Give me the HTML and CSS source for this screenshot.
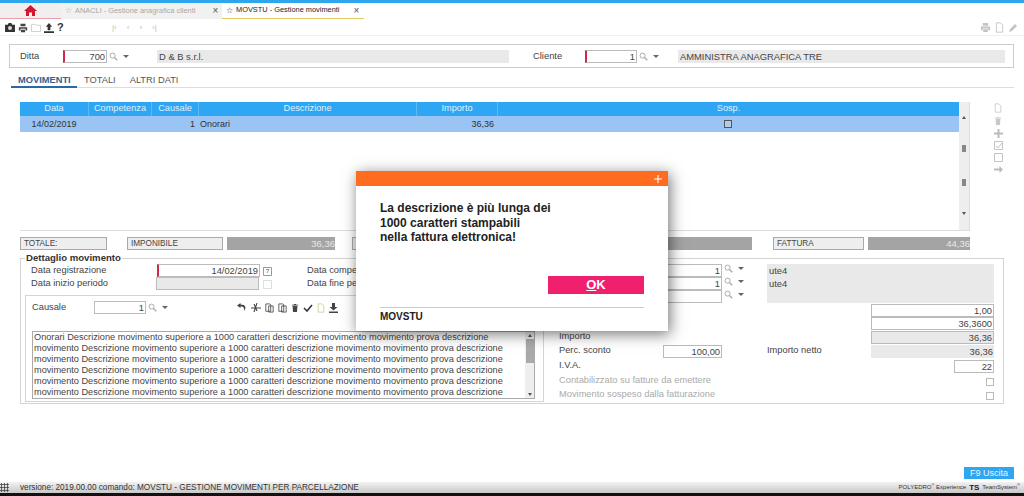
FILE: index.html
```html
<!DOCTYPE html>
<html lang="it">
<head>
<meta charset="utf-8">
<title>MOVSTU - Gestione movimenti</title>
<link rel="stylesheet" href="styles.css">
</head>
<body>
<svg class="defs" width="0" height="0" aria-hidden="true">
  <symbol id="i-search" viewBox="0 0 10 10"><circle cx="4" cy="4" r="2.8" fill="none" stroke="currentColor" stroke-width="1.1"/><path d="M6 6l3.2 3.2" stroke="currentColor" stroke-width="1.5"/></symbol>
  <symbol id="i-doc" viewBox="0 0 10 12"><path d="M1.5 .8h4.5l2.5 2.5v7.9h-7z" fill="none" stroke="currentColor"/></symbol>
  <symbol id="i-trash" viewBox="0 0 10 12"><path d="M1 2h8v1H1zM3.5 1h3v1h-3zM2 3.5h6L7.5 11h-5z" fill="currentColor"/></symbol>
  <symbol id="i-print" viewBox="0 0 12 12"><path d="M3 1h6v3H3zM1 5h10v4H9V7H3v2H1zM3.5 8h5v3h-5z" fill="currentColor"/></symbol>
  <symbol id="i-copy" viewBox="0 0 11 12"><path d="M1 1h5l1 1v8H1zM4.5 3.5H10V11H4.5z" fill="none" stroke="currentColor"/></symbol>
</svg>
<div class="app">
  <div class="topline"></div>
  <nav class="tabs">
    <a class="tab tab-home"><svg width="13" height="11" viewBox="0 0 13 11"><path d="M6.5 0L13 6h-2v5H8V7.500H5V11H2V6H0z" fill="#d4152c"/></svg></a>
    <a class="tab tab-off"><span class="star">☆</span><span class="tab-name">ANACLI - Gestione anagrafica clienti</span><span class="close">×</span></a>
    <a class="tab tab-on"><span class="star">☆</span><span class="tab-name">MOVSTU - Gestione movimenti</span><span class="close">×</span></a>
  </nav>
  <div class="toolbar">
    <div class="tool-left">
      <svg width="10" height="9" viewBox="0 0 11 10"><path d="M0 2h3l1-2h3l1 2h3v8H0z" fill="#333"/><circle cx="5.500" cy="5.500" r="2.200" fill="#ddd"/></svg>
      <svg width="10" height="10" class="ink"><use href="#i-print"/></svg>
      <svg width="10" height="9" viewBox="0 0 11 10"><path d="M.5 1.500h4l1 1h5v7H.5z" fill="none" stroke="#ccc"/></svg>
      <svg width="10" height="10" viewBox="0 0 11 11"><path d="M5.500 0l3.500 4H7v4H4V4H2zM0 9h11v2H0z" fill="#333"/></svg>
      <b class="help">?</b>
    </div>
    <div class="pager"><span>|‹</span><span>‹</span><span>›</span><span>›|</span></div>
    <div class="tool-right">
      <svg width="11" height="11" class="mute"><use href="#i-print"/></svg>
      <svg width="9" height="11" class="mute"><use href="#i-doc"/></svg>
      <svg width="10" height="10" viewBox="0 0 10 10"><path d="M1 9l1-3 5-5 2 2-5 5z" fill="#c4c4c4"/></svg>
    </div>
  </div>

  <section class="head-box">
    <label class="head-label">Ditta</label>
    <span class="inp req w-ditta">700</span>
    <span class="look"><svg width="9" height="9"><use href="#i-search"/></svg><i class="caret"></i></span>
    <span class="ro w-dname">D &amp; B s.r.l.</span>
    <label class="head-label w-cl">Cliente</label>
    <span class="inp req w-cli">1</span>
    <span class="look look-short"><svg width="9" height="9"><use href="#i-search"/></svg><i class="caret"></i></span>
    <span class="ro w-cname">AMMINISTRA ANAGRAFICA TRE</span>
  </section>

  <div class="subtabs">
    <a class="subtab active">MOVIMENTI</a>
    <a class="subtab">TOTALI</a>
    <a class="subtab">ALTRI DATI</a>
  </div>

  <section class="grid-area">
    <div class="grid-wrap">
      <div class="grid-main">
        <div class="g-row g-head"><span>Data</span><span>Competenza</span><span>Causale</span><span>Descrizione</span><span>Importo</span><span>Sosp.</span></div>
        <div class="g-row g-sel"><span>14/02/2019</span><span></span><span class="r">1</span><span class="l">Onorari</span><span class="r">36,36</span><span><i class="cb dark"></i></span></div>
      </div>
      <div class="vscroll"><i class="up"></i><i class="dbl"></i><i class="dbl"></i><i class="down"></i></div>
    </div>
    <div class="side-tools">
      <svg width="8" height="10"><use href="#i-doc"/></svg>
      <svg width="8" height="10"><use href="#i-trash"/></svg>
      <svg width="9" height="9" viewBox="0 0 9 9"><path d="M3.500 0h2v3.500H9v2H5.500V9h-2V5.500H0v-2h3.500z" fill="#bbb"/></svg>
      <svg width="9" height="9" viewBox="0 0 9 9"><path d="M.5.500h8v8h-8zM2 5l2 2 4-5" fill="none" stroke="#c4c4c4"/></svg>
      <svg width="9" height="9" viewBox="0 0 9 9"><path d="M.5.500h8v8h-8z" fill="none" stroke="#c4c4c4"/></svg>
      <svg width="9" height="9" viewBox="0 0 9 9"><path d="M0 3.500h5.500V1L9 4.500 5.500 8V5.500H0z" fill="#bbb"/></svg>
    </div>
  </section>

  <section class="totals">
    <span class="t-label w-tot">TOTALE:</span>
    <span class="t-label w-imp">IMPONIBILE</span>
    <span class="t-val w-v1">36,36</span>
    <span class="t-label w-mid"></span>
    <span class="t-val w-v2"></span>
    <span class="t-label w-fat">FATTURA</span>
    <span class="t-val w-v3">44,36</span>
  </section>

  <fieldset class="detail">
    <legend>Dettaglio movimento</legend>
    <div class="detail-left">
      <div class="date-row"><label class="d-label">Data registrazione</label><span class="inp req w-date">14/02/2019</span><svg class="cal" width="9" height="10" viewBox="0 0 9 10"><path d="M.5 1.500h8v8h-8zM3 3.500h3L4 7" fill="none" stroke="#999"/></svg><label class="d-label2">Data competenza</label></div>
      <div class="date-row"><label class="d-label">Data inizio periodo</label><span class="ro-b w-date2"></span><svg class="cal" width="9" height="10" viewBox="0 0 9 10"><path d="M.5 1.500h8v8h-8z" fill="none" stroke="#ddd"/></svg><label class="d-label2">Data fine periodo</label></div>
      <div class="causale-box">
        <div class="causale-row">
          <label class="c-label">Causale</label>
          <span class="inp w-caus">1</span>
          <span class="look"><svg width="9" height="9"><use href="#i-search"/></svg><i class="caret"></i></span>
          <div class="edit-tools">
            <svg width="10" height="9" viewBox="0 0 10 9"><path d="M3.500 0L0 2.500 3.500 5V3.500C6 3 7.500 4 7 8 9.500 5 9 1.500 3.500 1.500z" fill="#444"/></svg>
            <svg width="10" height="9" viewBox="0 0 10 9"><path d="M0 5h10M6 0L3 9M3 1l3 7" stroke="#444" stroke-width="1.100" fill="none"/></svg>
            <svg width="9" height="10" class="ink"><use href="#i-copy"/></svg>
            <svg width="9" height="10" class="ink"><use href="#i-copy"/></svg>
            <svg width="8" height="10" class="ink"><use href="#i-trash"/></svg>
            <svg width="10" height="8" viewBox="0 0 10 8"><path d="M1 4l3 3 5-6" fill="none" stroke="#333" stroke-width="1.600"/></svg>
            <svg width="8" height="10" class="olive"><use href="#i-doc"/></svg>
            <svg width="9" height="10" viewBox="0 0 9 10"><path d="M3 0h3v4h2.500L4.500 7.500.5 4H3zM0 8.500h9V10H0z" fill="#444"/></svg>
          </div>
        </div>
        <div class="memo">
          <p class="memo-text">Onorari Descrizione movimento superiore a 1000 caratteri descrizione movimento movimento prova descrizione<br>movimento Descrizione movimento superiore a 1000 caratteri descrizione movimento movimento prova descrizione<br>movimento Descrizione movimento superiore a 1000 caratteri descrizione movimento movimento prova descrizione<br>movimento Descrizione movimento superiore a 1000 caratteri descrizione movimento movimento prova descrizione<br>movimento Descrizione movimento superiore a 1000 caratteri descrizione movimento movimento prova descrizione<br>movimento Descrizione movimento superiore a 1000 caratteri descrizione movimento movimento prova descrizione</p>
          <div class="memo-bar"><i class="up"></i><i class="thumb"></i><i class="down"></i></div>
        </div>
      </div>
    </div>
    <div class="detail-right">
      <span class="f-label">Centro</span><span class="inp r-inp">1</span><span class="look"><svg width="9" height="9"><use href="#i-search"/></svg><i class="caret"></i></span><span class="ro span2">ute4</span>
      <span class="f-label">Voce</span><span class="inp r-inp">1</span><span class="look"><svg width="9" height="9"><use href="#i-search"/></svg><i class="caret"></i></span><span class="ro span2">ute4</span>
      <span class="f-label">Conto</span><span class="inp r-inp"></span><span class="look"><svg width="9" height="9"><use href="#i-search"/></svg><i class="caret"></i></span><span class="ro span2"></span>
      <span class="f-label span4">Quantità</span><span class="inp">1,00</span>
      <span class="f-label span4">Prezzo</span><span class="inp">36,3600</span>
      <span class="f-label span4">Importo</span><span class="ro-b num">36,36</span>
      <span class="f-label">Perc. sconto</span><span class="inp r-inp">100,00</span><span></span><span class="f-label">Importo netto</span><span class="ro num">36,36</span>
      <span class="f-label span4">I.V.A.</span><span class="inp w-iva">22</span>
      <span class="f-label muted span4">Contabilizzato su fatture da emettere</span><i class="cb end"></i>
      <span class="f-label muted span4">Movimento sospeso dalla fatturazione</span><i class="cb end"></i>
    </div>
  </fieldset>

  <div class="actions"><button class="exit">F9 Uscita</button></div>
  <footer class="status">
    <div class="status-left"><span class="dots"></span><span>versione: 2019.00.00 comando: MOVSTU - GESTIONE MOVIMENTI PER PARCELLAZIONE</span></div>
    <div class="status-right"><span>POLYEDRO<sup>®</sup> Experience</span><b class="ts">TS</b><span>TeamSystem<sup>®</sup></span></div>
  </footer>
  <div class="blackline"></div>
</div>

<div class="modal">
  <div class="modal-bar"><svg width="8" height="8" viewBox="0 0 9 9"><path d="M3.900 0h1.200v3.900H9v1.200H5.100V9H3.900V5.100H0V3.900h3.900z" fill="#fff"/></svg></div>
  <div class="modal-body">
    <p class="modal-msg">La descrizione è più lunga dei<br>1000 caratteri stampabili<br>nella fattura elettronica!</p>
    <div class="modal-act"><button class="ok"><u>O</u>K</button></div>
    <div class="modal-foot">MOVSTU</div>
  </div>
</div>
</body>
</html>
```
FILE: styles.css
```css
* { box-sizing: border-box; }
html, body { margin: 0; height: 100%; }
body { font: 9.3px/1.2 "Liberation Sans", Arial, sans-serif; color: #444; background: #fff; overflow: hidden; }
.defs { position: absolute; }
.app { height: 496px; display: flex; flex-direction: column; }
.topline { height: 3px; background: #2ea6ee; flex: none; }

.tabs { display: flex; height: 16px; flex: none; }
.tab { display: flex; align-items: center; font-size: 7.4px; }
.tab-home { width: 61px; justify-content: center; background: #f3eeee; border-bottom: 1px solid #e8a0b0; }
.tab-off { width: 161px; background: #f1f1f1; color: #a8a8a8; padding: 0 2px 0 3px; }
.tab-on { width: 142px; color: #222; border-bottom: 1px solid #e8c860; padding: 0 3px 0 3px; }
.star { width: 9px; text-align: center; margin-right: 2px; font-size: 8px; }
.tab-name { flex: 1; white-space: nowrap; }
.close { width: 9px; font-size: 10px; color: #555; text-align: center; }

.toolbar { height: 17px; flex: none; display: flex; align-items: center; padding: 1px 5px 0; border-bottom: 1px solid #f0f0f0; }
.tool-left { display: flex; align-items: center; gap: 3px; width: 107px; }
.help { font-size: 11px; color: #333; }
.pager { display: flex; gap: 10px; color: #bbb; font-size: 8px; }
.tool-right { margin-left: auto; display: flex; align-items: center; gap: 4px; margin-right: 1px; }
.ink { color: #444; }
.mute { color: #c4c4c4; }
.olive { color: #c8cc90; }

.head-box { flex: none; height: 24px; margin: 8px 10px 0 9px; border: 1px solid #ccc; display: flex; align-items: center; padding: 0 8px 0 10px; font-size: 9.4px; }
.head-label { width: 43px; color: #444; }
.inp { display: block; height: 13px; line-height: 12px; border: 1px solid #bbb; text-align: right; padding-right: 1px; background: #fff; color: #444; font-size: 9.3px; white-space: nowrap; }
.req { border-left: 2px solid #d02848; }
.w-ditta { width: 44px; }
.w-cli { width: 52px; }
.look { display: flex; align-items: center; width: 50px; padding-left: 2px; gap: 5px; color: #aaa; flex: none; }
.look-short { width: 41px; }
.detail-right .look { width: 45px; }
.causale-row .look { width: 37px; }
.caret { width: 0; height: 0; border: 3px solid transparent; border-top: 3px solid #666; border-bottom: 0; }
.ro { display: block; height: 13px; line-height: 13px; background: #e9e9e9; color: #444; padding-left: 2px; font-size: 9.4px; white-space: nowrap; }
.w-dname { width: 352px; }
.w-cl { width: 52px; margin-left: 24px; }
.w-cname { width: 327px; }

.subtabs { flex: none; height: 14px; margin: 6px 10px 0 11px; display: flex; border-bottom: 1px solid #ddd; font-size: 9.3px; }
.subtab { padding: 0 7px; line-height: 13px; color: #555; white-space: nowrap; }
.subtab.active { color: #33638f; font-weight: bold; border-bottom: 2px solid #2a6aa0; height: 14px; width: 66px; }

.grid-area { flex: none; height: 129px; margin: 14px 0 0 20px; display: flex; }
.grid-wrap { flex: none; width: 950px; border-right: 1px solid #ddd; border-bottom: 1px solid #ddd; display: flex; }
.grid-main { flex: 1; }
.g-row { display: grid; grid-template-columns: 68px 63px 47px 218px 81px 1fr; text-align: center; align-items: center; }
.g-row span { height: 100%; display: flex; align-items: center; justify-content: center; }
.g-head { height: 14px; background: #2ea6f4; color: #dff1ff; font-size: 9.2px; }
.g-head span + span { border-left: 1px solid #5cb9f5; }
.g-sel { height: 16px; background: #99c4f4; color: #333; font-size: 9px; }
.g-sel span.r { justify-content: flex-end; padding-right: 3px; }
.g-sel span.l { justify-content: flex-start; padding-left: 2px; }
.cb { display: block; width: 8px; height: 8px; border: 1px solid #bbb; background: #fff; }
.cb.dark { border-color: #555; background: #b4cbe8; }
.vscroll { width: 10px; flex: none; background: #eeeeee; display: flex; flex-direction: column; justify-content: space-between; align-items: center; padding: 14px 0 15px; }
.up { width: 0; height: 0; border: 2px solid transparent; border-bottom: 3px solid #555; border-top: 0; }
.down { width: 0; height: 0; border: 2px solid transparent; border-top: 3px solid #555; border-bottom: 0; }
.dbl { width: 4px; height: 7px; background: #888; }
.side-tools { flex: none; display: flex; flex-direction: column; align-items: center; gap: 3px; width: 54px; padding: 1px 0 0 2px; color: #c8c8c8; }

.totals { flex: none; height: 13px; margin: 6px 0 0 20px; display: flex; font-size: 8.2px; }
.t-label { display: block; height: 13px; line-height: 11px; background: #eee; border: 1px solid #aaa; padding-left: 3px; color: #444; }
.t-val { display: block; height: 13px; line-height: 13px; background: #a4a4a4; color: #e8e8e8; text-align: right; font-size: 9.5px; }
.w-tot { width: 87px; margin-right: 20px; }
.w-imp { width: 96px; margin-right: 4px; }
.w-v1 { width: 108px; margin-right: 17px; }
.w-mid { width: 96px; margin-right: 4px; }
.w-v2 { width: 300px; margin-right: 21px; }
.w-fat { width: 91px; margin-right: 4px; }
.w-v3 { width: 102px; }

.detail { flex: none; width: 984px; height: 151px; margin: 3px 0 0 20px; padding: 1px 4px 0 4px; border: 1px solid #d4d4d4; display: grid; grid-template-columns: 520px 1fr; column-gap: 14px; min-width: 0; }
.detail legend { font-weight: bold; font-size: 9.6px; color: #333; padding: 0 1px; line-height: 1; height: 10px; }
.date-row { display: flex; align-items: center; height: 13px; }
.d-label { width: 132px; padding-left: 6px; color: #444; }
.w-date { width: 103px; }
.w-date2 { width: 103px; margin-left: -1px; margin-right: 1px; }
.ro-b { display: block; height: 13px; line-height: 12px; background: #e9e9e9; border: 1px solid #bbb; color: #444; text-align: right; padding-right: 1px; font-size: 9.3px; }
.cal { margin-left: 3px; flex: none; }
.d-label2 { margin-left: 35px; white-space: nowrap; }
.causale-box { height: 107px; width: 519px; margin-top: 5px; border: 1px solid #d4d4d4; padding: 5px 8px 0 6px; }
.causale-row { display: flex; align-items: center; height: 13px; }
.c-label { width: 62px; color: #444; }
.w-caus { width: 52px; }
.edit-tools { display: flex; gap: 4px; align-items: center; margin-left: 54px; }
.memo { margin-top: 17px; height: 68px; width: 503px; border: 1px solid #aaa; display: flex; overflow: hidden; }
.memo-text { margin: 0; padding: 0 0 0 1px; flex: 1; font-size: 9.2px; line-height: 11px; white-space: nowrap; overflow: hidden; color: #444; }
.memo-bar { width: 9px; flex: none; background: #eee; display: flex; flex-direction: column; align-items: center; padding: 2px 0; justify-content: space-between; }
.thumb { width: 8px; height: 24px; margin-bottom: 28px; background: #aaa; }

.detail-right { display: grid; grid-template-columns: 104px 59px 45px 104px 123px; grid-template-rows: 13px 13px 14px 13px 14px 14px 15px 15px 14px 14px; align-items: start; align-content: start; }
.f-label { color: #444; white-space: nowrap; }
.span2 { grid-column: span 2; }
.span4 { grid-column: span 4; }
.r-inp { width: 59px; }
.num { text-align: right; padding-right: 1px; }
.w-iva { width: 40px; justify-self: end; }
.muted { color: #aaa; }
.cb.end { justify-self: end; margin: 3px 0 0 0; }

.actions { flex: 1; display: flex; justify-content: flex-end; align-items: flex-end; padding: 0 10px 3px 0; }
.exit { width: 50px; height: 12px; border: 0; padding: 0; background: #2ea6f0; color: #e6f5ff; font: 9px/12px "Liberation Sans", Arial, sans-serif; }
.status { flex: none; height: 11px; background: linear-gradient(#f2f2f2, #c8c8c8); display: flex; justify-content: space-between; align-items: center; font-size: 8.2px; color: #333; padding: 0 4px 0 0; }
.status-left { display: flex; align-items: center; }
.dots { width: 9px; height: 9px; margin: 0 11px 0 0; background: radial-gradient(circle, #444 45%, transparent 55%) 0 0 / 3px 3px; }
.status-right { display: flex; align-items: center; gap: 3px; font-size: 6px; }
.status-right sup { font-size: 4px; line-height: 0; }
.ts { font-size: 8px; color: #222; }
.blackline { flex: none; height: 3px; background: #111; }

.modal { position: absolute; left: 356px; top: 171px; width: 312px; height: 160px; background: #fff; box-shadow: 2px 3px 14px rgba(0,0,0,.55); display: flex; flex-direction: column; }
.modal-bar { flex: none; height: 15px; background: #ff6c1f; display: flex; align-items: center; justify-content: flex-end; padding-right: 6px; }
.modal-body { flex: 1; padding: 15px 24px 0; display: flex; flex-direction: column; }
.modal-msg { margin: 0; height: 75px; font-weight: bold; font-size: 12px; line-height: 14.5px; color: #222; }
.modal-act { display: flex; justify-content: flex-end; }
.ok { width: 96px; height: 18px; border: 0; padding: 0; background: #f0206e; color: #fff; font: bold 13px/18px "Liberation Sans", Arial, sans-serif; }
.modal-foot { margin-top: 13px; border-top: 1px solid #ccc; padding-top: 3px; font-weight: bold; font-size: 10px; color: #222; }
```
